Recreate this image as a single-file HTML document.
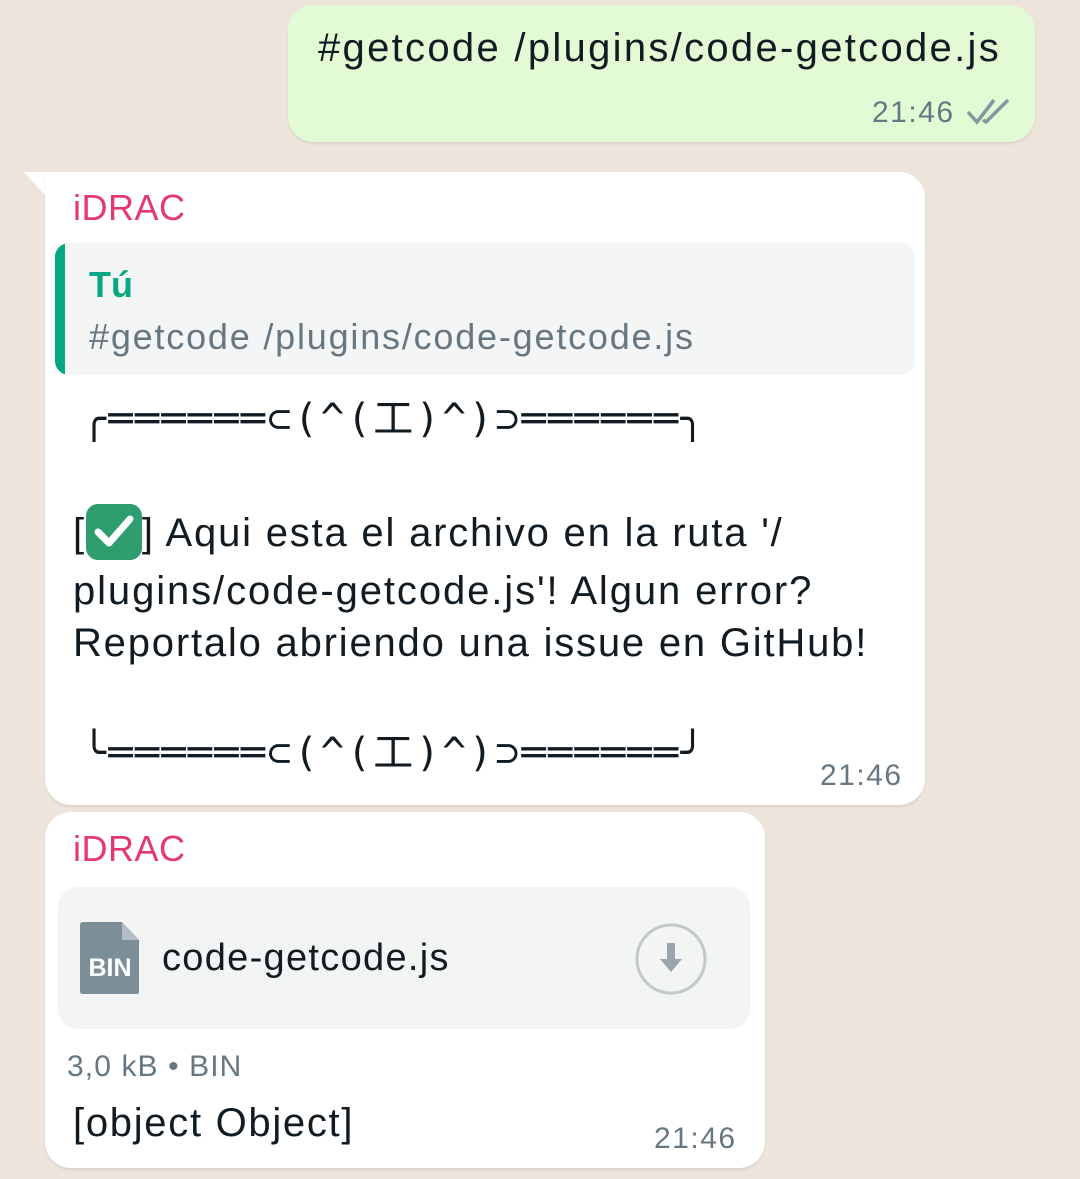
<!DOCTYPE html>
<html><head><meta charset="utf-8"><style>
body{margin:0;width:1080px;height:1179px;background:#ede5dc;position:relative;overflow:hidden;font-family:"Liberation Sans","DejaVu Sans",sans-serif;color:#111b21}
.a{position:absolute;white-space:nowrap}
.b{position:absolute;background:#fff;border-radius:26px;box-shadow:0 2px 2px rgba(0,0,0,.08)}
.t{color:#667781;font-size:30px;letter-spacing:1.5px}
.k{font-family:"DejaVu Sans Mono","Liberation Mono",monospace;font-size:40px;letter-spacing:2.4px}
</style></head><body>
<div class="b" style="left:288px;top:5px;width:747px;height:137px;background:#e2fbd5"></div>
<div class="a" style="left:318px;top:26px;font-size:40px;letter-spacing:2.3px">#getcode /plugins/code-getcode.js</div>
<div class="a t" style="left:872px;top:96px">21:46</div>
<svg class="a" style="left:966px;top:98px" width="46" height="28" viewBox="0 0 46 28"><path d="M2 14l9 10L28 2M17 22l3 2L42 2" fill="none" stroke="#8696a0" stroke-width="3.5"/></svg>

<svg class="a" style="left:20px;top:172px" width="40" height="40"><path d="M4 0H40V40Z" fill="#fff"/></svg>
<div class="b" style="left:45px;top:172px;width:880px;height:633px;border-top-left-radius:0"></div>
<div class="a" style="left:73px;top:187px;font-size:36px;color:#e5386f;letter-spacing:0.5px">iDRAC</div>
<div class="a" style="left:55px;top:243px;width:860px;height:132px;background:#f4f5f5;border-radius:14px;overflow:hidden"><div style="width:10px;height:100%;background:#06a884"></div></div>
<div class="a" style="left:89px;top:264px;font-size:36px;font-weight:bold;color:#06a884">Tú</div>
<div class="a" style="left:89px;top:316px;font-size:36px;color:#667781;letter-spacing:1.8px">#getcode /plugins/code-getcode.js</div>
<div class="a k" style="left:82px;top:386px">╭══════⊂(^(工)^)⊃══════╮</div>
<div class="a" style="left:73px;top:504px;font-size:40px;line-height:52px;letter-spacing:1.8px">[<span style="display:inline-block;width:56px;height:56px;background:#2f9e6e;border-radius:12px;vertical-align:-14px;position:relative"><svg style="position:absolute;left:8px;top:10px" width="40" height="36"><path d="M4 18l11 11L36 5" fill="none" stroke="#fff" stroke-width="7" stroke-linecap="round" stroke-linejoin="round"/></svg></span>] Aqui esta el archivo en la ruta '/</div>
<div class="a" style="left:73px;top:569px;font-size:40px;letter-spacing:1.9px">plugins/code-getcode.js'! Algun error?</div>
<div class="a" style="left:73px;top:621px;font-size:40px;letter-spacing:1.8px">Reportalo abriendo una issue en GitHub!</div>
<div class="a k" style="left:82px;top:720px">╰══════⊂(^(工)^)⊃══════╯</div>
<div class="a t" style="left:820px;top:759px">21:46</div>

<div class="b" style="left:45px;top:812px;width:720px;height:356px"></div>
<div class="a" style="left:73px;top:828px;font-size:36px;color:#e5386f;letter-spacing:0.5px">iDRAC</div>
<div class="a" style="left:58px;top:887px;width:692px;height:142px;background:#f3f4f4;border-radius:20px"></div>
<svg class="a" style="left:80px;top:922px" width="60" height="72"><path d="M3 0H42L59 18V70Q59 72 57 72H3Q0 72 0 69V3Q0 0 3 0Z" fill="#7c8f99"/><path d="M42 0V18H59Z" fill="#b3bec4"/><text x="30" y="54" text-anchor="middle" font-family="Liberation Sans" font-weight="bold" font-size="25" fill="#fff">BIN</text></svg>
<div class="a" style="left:162px;top:937px;font-size:38px;letter-spacing:1.3px">code-getcode.js</div>
<svg class="a" style="left:634px;top:922px" width="74" height="74"><circle cx="37" cy="37" r="34" fill="none" stroke="#c3c8cb" stroke-width="3"/><path d="M33 21h8v16h7L37 50 26 37h7Z" fill="#9aa5ab"/></svg>
<div class="a t" style="left:67px;top:1050px;font-size:30px;letter-spacing:1.1px">3,0 kB • BIN</div>
<div class="a" style="left:73px;top:1101px;font-size:40px;letter-spacing:1.7px">[object Object]</div>
<div class="a t" style="left:654px;top:1122px">21:46</div>
</body></html>
